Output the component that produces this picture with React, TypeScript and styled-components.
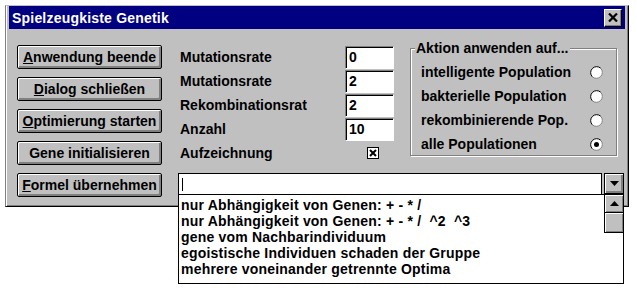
import React from 'react'
import styled, { createGlobalStyle } from 'styled-components'

const GlobalStyle = createGlobalStyle`
  html, body {
    margin: 0;
    padding: 0;
    background: #ffffff;
  }
  body {
    font-family: 'Liberation Sans', Arial, sans-serif;
    font-size: 14px;
    font-weight: bold;
    color: #000000;
  }
`

const Page = styled.div`
  box-sizing: border-box;
  min-height: 100vh;
  padding: 5px 0 0 5px;
`

const Window = styled.div`
  box-sizing: border-box;
  width: 624px;
  height: 202px;
  padding: 0 3px;
  background: #c0c0c0;
  border: 1px solid;
  border-color: #c0c0c0 #000000 #000000 #808080;
  box-shadow: inset 1px 0 #ffffff, inset -1px -1px #808080;
`

const TitleBar = styled.div`
  height: 23px;
  display: flex;
  align-items: center;
  justify-content: space-between;
  padding: 0 3px 0 3px;
  background: #000080;
  color: #ffffff;
  letter-spacing: 0.2px;
`

const CloseButton = styled.div`
  box-sizing: border-box;
  width: 18px;
  height: 18px;
  display: flex;
  align-items: center;
  justify-content: center;
  background: #c0c0c0;
  border: 1px solid;
  border-color: #ffffff #000000 #000000 #ffffff;
  box-shadow: inset -1px -1px #808080;
`

const Body = styled.div`
  display: flex;
  gap: 16px;
  padding: 16px 0 0 8px;
`

const ButtonColumn = styled.div`
  display: flex;
  flex-direction: column;
  gap: 8px;
  width: 145px;
`

const PushButton = styled.div`
  box-sizing: border-box;
  height: 24px;
  display: flex;
  align-items: center;
  justify-content: center;
  padding: 0 2px;
  background: #c0c0c0;
  border: 1px solid #000000;
  border-radius: 2px;
  box-shadow: inset 1px 1px #ffffff, inset -1px -1px #808080, inset -2px -2px #808080;
  white-space: nowrap;
  overflow: hidden;
`

const RightColumn = styled.div`
  display: flex;
  flex-direction: column;
  gap: 8px;
`

const TopArea = styled.div`
  display: flex;
  align-items: flex-start;
  gap: 16px;
`

const FieldGrid = styled.div`
  display: grid;
  grid-template-columns: 167px 49px;
  grid-auto-rows: 24px;
`

const FieldLabel = styled.div`
  padding-left: 2px;
  line-height: 24px;
  white-space: nowrap;
  overflow: hidden;
`

const NumberBox = styled.div`
  box-sizing: border-box;
  margin-top: 1px;
  height: 23px;
  padding-left: 3px;
  line-height: 20px;
  background: #ffffff;
  border: 1px solid;
  border-color: #808080 #ffffff #ffffff #808080;
  box-shadow: inset 1px 1px #000000;
`

const CheckCell = styled.div`
  display: flex;
  align-items: center;
  padding-left: 22px;
`

const GroupBox = styled.div`
  position: relative;
  box-sizing: border-box;
  width: 207px;
  height: 108px;
  margin-top: 3px;
  padding: 11px 13px 0 10px;
  border: 1px solid #808080;
  box-shadow: inset 1px 1px #ffffff, 1px 1px #ffffff;
`

const GroupLegend = styled.span`
  position: absolute;
  top: -9px;
  left: 4px;
  padding: 0 2px 0 1px;
  line-height: 16px;
  background: #c0c0c0;
`

const RadioRow = styled.div`
  height: 24px;
  display: flex;
  align-items: center;
  justify-content: space-between;
  white-space: nowrap;
`

const ComboRow = styled.div`
  position: relative;
  display: flex;
  gap: 2px;
  width: 446px;
`

const ComboEdit = styled.div`
  box-sizing: border-box;
  width: 424px;
  height: 22px;
  display: flex;
  align-items: center;
  padding-left: 3px;
  background: #ffffff;
  border: 1px solid #000000;
`

const Caret = styled.span`
  width: 1px;
  height: 13px;
  background: #000000;
`

const DropButton = styled.div`
  box-sizing: border-box;
  width: 20px;
  height: 21px;
  display: flex;
  align-items: center;
  justify-content: center;
  background: #c0c0c0;
  border: 1px solid #000000;
  box-shadow: inset 1px 1px #ffffff, inset -1px -1px #808080, inset -2px -2px #808080;
`

const ListOverlay = styled.div`
  position: absolute;
  top: 21px;
  left: 0;
  z-index: 1;
  box-sizing: border-box;
  width: 446px;
  height: 90px;
  display: flex;
  background: #ffffff;
  border: 1px solid #000000;
`

const ListItems = styled.div`
  flex: 1;
  padding: 2px 0 0 2px;
`

const ListItem = styled.div`
  line-height: 16px;
  letter-spacing: 0.2px;
  white-space: pre;
`

const ScrollColumn = styled.div`
  width: 19px;
  display: flex;
  flex-direction: column;
`

const ScrollPart = styled.div<{ $h: number }>`
  box-sizing: border-box;
  height: ${(p) => p.$h}px;
  display: flex;
  align-items: center;
  justify-content: center;
  background: #c0c0c0;
  border-left: 1px solid #000000;
  border-bottom: 1px solid #000000;
  box-shadow: inset 1px 1px #ffffff, inset -1px -1px #808080;
`

const Radio = ({ checked }: { checked?: boolean }) => (
  <svg width="13" height="13" viewBox="0 0 13 13">
    <circle cx="6.5" cy="6.5" r="6" fill="#ffffff" />
    <path d="M2.26 10.74 A6 6 0 0 1 10.74 2.26" fill="none" stroke="#000000" strokeWidth="1" />
    <path d="M10.74 2.26 A6 6 0 0 1 2.26 10.74" fill="none" stroke="#808080" strokeWidth="1" />
    {checked && <circle cx="6.5" cy="6.5" r="2.5" fill="#000000" />}
  </svg>
)

const CheckBox = () => (
  <svg width="12" height="12" viewBox="0 0 12 12">
    <rect x="0.5" y="0.5" width="11" height="11" fill="#ffffff" stroke="#000000" />
    <path d="M3 3 L9 9 M9 3 L3 9" stroke="#000000" strokeWidth="2" />
  </svg>
)

const CloseGlyph = () => (
  <svg width="10" height="9" viewBox="0 0 10 9">
    <path d="M1 0.5 L9 8.5 M9 0.5 L1 8.5" stroke="#000000" strokeWidth="2.2" />
  </svg>
)

const Triangle = ({ up }: { up?: boolean }) => (
  <svg width="9" height="5" viewBox="0 0 9 5">
    <polygon points={up ? '0,5 9,5 4.5,0' : '0,0 9,0 4.5,5'} fill="#000000" />
  </svg>
)

const fields = [
  { label: 'Mutationsrate', value: '0' },
  { label: 'Mutationsrate', value: '2' },
  { label: 'Rekombinationsrat', value: '2' },
  { label: 'Anzahl', value: '10' },
]

const populations = [
  { label: 'intelligente Population', checked: false },
  { label: 'bakterielle Population', checked: false },
  { label: 'rekombinierende Pop.', checked: false },
  { label: 'alle Populationen', checked: true },
]

const formulas = [
  'nur Abhängigkeit von Genen: + - * /',
  'nur Abhängigkeit von Genen: + - * /  ^2  ^3',
  'gene vom Nachbarindividuum',
  'egoistische Individuen schaden der Gruppe',
  'mehrere voneinander getrennte Optima',
]

export default function App() {
  return (
    <Page>
      <GlobalStyle />
      <Window>
        <TitleBar>
          <span>Spielzeugkiste Genetik</span>
          <CloseButton>
            <CloseGlyph />
          </CloseButton>
        </TitleBar>
        <Body>
          <ButtonColumn>
            <PushButton>
              <span>
                <u>A</u>nwendung beende
              </span>
            </PushButton>
            <PushButton>
              <span>
                <u>D</u>ialog schließen
              </span>
            </PushButton>
            <PushButton>
              <span>
                <u>O</u>ptimierung starten
              </span>
            </PushButton>
            <PushButton>Gene initialisieren</PushButton>
            <PushButton>
              <span>
                <u>F</u>ormel übernehmen
              </span>
            </PushButton>
          </ButtonColumn>

          <RightColumn>
            <TopArea>
              <FieldGrid>
                {fields.map((f, i) => (
                  <React.Fragment key={i}>
                    <FieldLabel>{f.label}</FieldLabel>
                    <NumberBox>{f.value}</NumberBox>
                  </React.Fragment>
                ))}
                <FieldLabel>Aufzeichnung</FieldLabel>
                <CheckCell>
                  <CheckBox />
                </CheckCell>
              </FieldGrid>

              <GroupBox>
                <GroupLegend>Aktion anwenden auf...</GroupLegend>
                {populations.map((p) => (
                  <RadioRow key={p.label}>
                    <span>{p.label}</span>
                    <Radio checked={p.checked} />
                  </RadioRow>
                ))}
              </GroupBox>
            </TopArea>

            <ComboRow>
              <ComboEdit>
                <Caret />
              </ComboEdit>
              <DropButton>
                <Triangle />
              </DropButton>
              <ListOverlay>
                <ListItems>
                  {formulas.map((f) => (
                    <ListItem key={f}>{f}</ListItem>
                  ))}
                </ListItems>
                <ScrollColumn>
                  <ScrollPart $h={18}>
                    <Triangle up />
                  </ScrollPart>
                  <ScrollPart $h={20} />
                </ScrollColumn>
              </ListOverlay>
            </ComboRow>
          </RightColumn>
        </Body>
      </Window>
    </Page>
  )
}
